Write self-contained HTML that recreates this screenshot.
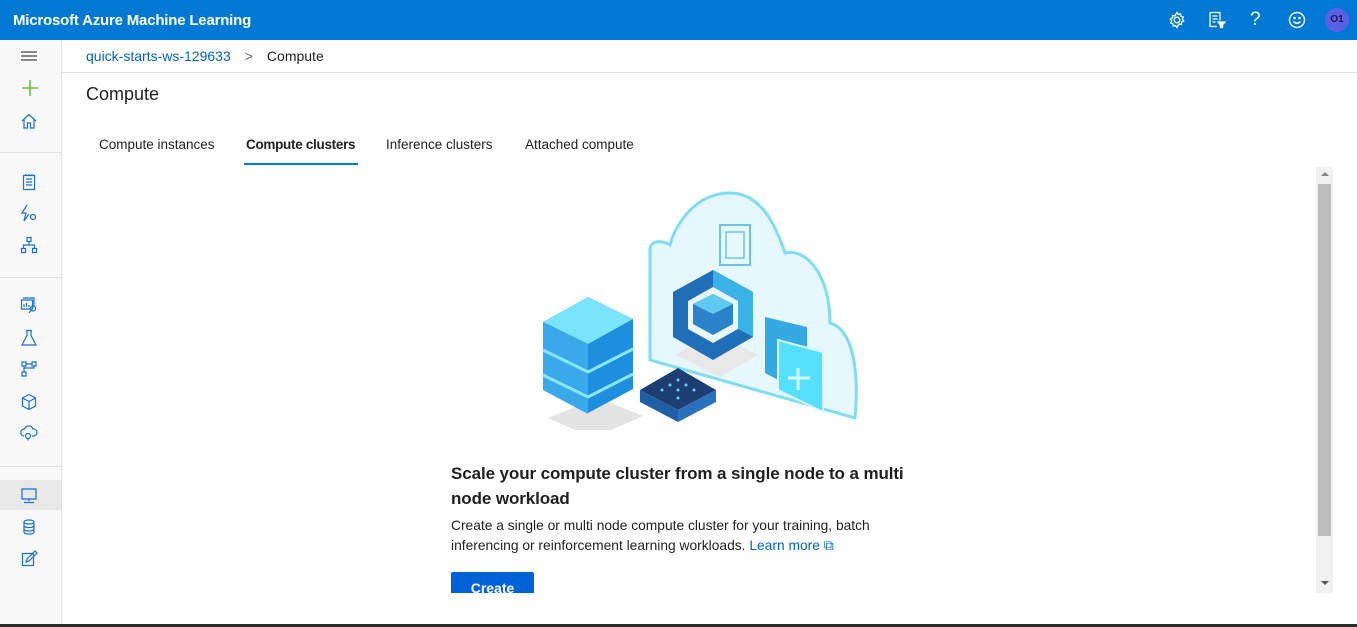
<!DOCTYPE html>
<html><head><meta charset="utf-8"><style>
*{margin:0;padding:0;box-sizing:border-box}
body{width:1357px;height:627px;overflow:hidden;background:#fff;font-family:"Liberation Sans",sans-serif;position:relative;color:#201f1e}
.top{position:absolute;left:0;top:0;width:1357px;height:40px;background:#0078d4;color:#fff}
.top .t{position:absolute;left:13px;top:12px;font-size:15px;font-weight:bold;letter-spacing:-0.2px}
.side{position:absolute;left:0;top:40px;width:62px;height:584px;background:#f8f8f8;border-right:1px solid #e1dfdd}
.side svg{position:absolute;left:20px}
.sep{position:absolute;left:0;width:61px;height:1px;background:#e1dfdd}
.bc{position:absolute;left:86px;top:48px;font-size:14px}
.bcline{position:absolute;left:62px;top:72px;width:1295px;height:1px;background:#e1dfdd}
h1{position:absolute;left:86px;top:84px;font-size:18px;font-weight:normal}
.tab{position:absolute;top:137px;font-size:13.5px}
.ul{position:absolute;left:244px;top:163px;width:114px;height:2px;background:#0078d4}
.h2{position:absolute;left:451px;top:461px;font-size:17px;font-weight:bold;line-height:25px;width:480px;letter-spacing:-0.1px}
.p{position:absolute;left:451px;top:516px;font-size:13.8px;line-height:20px;width:470px}
.btn{position:absolute;left:451px;top:572px;width:83px;height:21px;background:#0062d9;border-radius:2px 2px 0 0;color:#fff;font-size:14px;text-align:center;padding-top:8px;overflow:hidden;font-weight:bold;line-height:16px}
.track{position:absolute;left:1316px;top:167px;width:17px;height:426px;background:#f0f0f0}
.thumb{position:absolute;left:1318px;top:184px;width:13px;height:352px;background:#bdbdbd}
.bot{position:absolute;left:0;top:624px;width:1357px;height:3px;background:#2b2b2b}
</style></head><body>
<div class="top"><div class="t">Microsoft Azure Machine Learning</div>
<svg style="position:absolute;left:1168px;top:11px" width="18" height="18" viewBox="0 0 18 18" fill="none" stroke="#fff" stroke-width="1.3"><circle cx="9" cy="9" r="2.8"/><path d="M9 1.5l1.3 2 2.3-.7.4 2.4 2.3.8-1 2.1 1.4 1.9-2.2 1-.1 2.4-2.4-.3L9 16.5l-1.3-2-2.3.7-.4-2.4-2.3-.8 1-2.1L2.3 8l2.2-1 .1-2.4 2.4.3z"/></svg>
<svg style="position:absolute;left:1208px;top:11px" width="18" height="18" viewBox="0 0 18 18" fill="none" stroke="#fff" stroke-width="1.3"><path d="M2 1.5h10v8M2 1.5v14h7M4.5 5h5M4.5 8h5M4.5 11h3"/><path d="M10 11h7l-2.5 3v2.5h-2V14z" fill="#fff"/></svg>
<div style="position:absolute;left:1250px;top:9px;font-size:19px;color:#fff">?</div>
<svg style="position:absolute;left:1288px;top:11px" width="18" height="18" viewBox="0 0 18 18" fill="none" stroke="#fff" stroke-width="1.4"><circle cx="9" cy="9" r="7.5"/><path d="M5.5 10.5q3.5 3.5 7 0"/><circle cx="6.5" cy="7" r=".6" fill="#fff"/><circle cx="11.5" cy="7" r=".6" fill="#fff"/></svg>
<div style="position:absolute;left:1325px;top:8px;width:24px;height:24px;border-radius:50%;background:#5b5fe7;color:#1b1a40;font-size:10px;text-align:center;line-height:24px;font-weight:bold">O1</div>
</div>
<div class="side">
<svg style="top:9px" width="18" height="14" stroke="#444" stroke-width="1.2"><path d="M1 3h16M1 7h16M1 11h16"/></svg>
<svg style="top:38px" width="20" height="20" stroke="#6bbf3a" stroke-width="1.6"><path d="M10 2v16M2 10h16"/></svg>
<svg style="top:72px" width="18" height="18" fill="none" stroke="#1a6fd1" stroke-width="1.2"><path d="M2 9L9 2.5 16 9M4 7.5V16h3.5v-5h3v5H14V7.5"/></svg>
<div class="sep" style="top:112px"></div>
<svg style="top:133px" width="18" height="18" fill="none" stroke="#1a6fd1" stroke-width="1.2"><path d="M3.5 2.5h11v14h-11zM6 6h6M6 9h6M6 12h6M6 1v2M9 1v2M12 1v2"/></svg>
<svg style="top:164px" width="18" height="18" fill="none" stroke="#1a6fd1" stroke-width="1.2"><path d="M7 1L2 9h4l-2 8 5-7"/><circle cx="13" cy="13" r="2.5"/></svg>
<svg style="top:196px" width="18" height="18" fill="none" stroke="#1a6fd1" stroke-width="1.2"><path d="M7 1.5h4v4H7zM1.5 12.5h4v4h-4zM12.5 12.5h4v4h-4zM9 5.5v3.5M3.5 12.5V9h11v3.5"/></svg>
<div class="sep" style="top:237px"></div>
<svg style="top:256px" width="18" height="18" fill="none" stroke="#1a6fd1" stroke-width="1.2"><path d="M3 2h11v8M1.5 4h11v9h-11zM4 11V8M6.5 11V7M9 11V9"/><circle cx="13" cy="12.5" r="2.5"/><path d="M11 14.5l-2 2.5"/></svg>
<svg style="top:289px" width="18" height="18" fill="none" stroke="#1a6fd1" stroke-width="1.2"><path d="M6 1.5h6M7 1.5v5L2 16h14L11 6.5v-5"/></svg>
<svg style="top:320px" width="18" height="18" fill="none" stroke="#1a6fd1" stroke-width="1.2"><path d="M2 2h4v4H2zM12 2h4v4h-4zM2 12h4v4H2zM6 4h6M4 6v6M14 6v2H4"/></svg>
<svg style="top:353px" width="18" height="18" fill="none" stroke="#1a6fd1" stroke-width="1.2"><path d="M9 1.5l6.5 3.5v8L9 16.5 2.5 13V5zM2.5 5L9 8.5 15.5 5M9 8.5v8"/></svg>
<svg style="top:384px" width="18" height="18" fill="none" stroke="#1a6fd1" stroke-width="1.2"><path d="M4 12a3.5 3.5 0 0 1 .5-7A4.5 4.5 0 0 1 13 5a3.5 3.5 0 0 1 1 7h-2"/><circle cx="8" cy="12" r="2.5"/><path d="M8 14.5v2"/></svg>
<div class="sep" style="top:426px"></div>
<div style="position:absolute;left:0;top:440px;width:61px;height:30px;background:#e8e8e8"></div>
<svg style="top:447px" width="18" height="18" fill="none" stroke="#1a6fd1" stroke-width="1.2"><path d="M2 2h14v10H2zM9 12v2M4 15.5h10"/></svg>
<svg style="top:478px" width="18" height="18" fill="none" stroke="#1a6fd1" stroke-width="1.2"><ellipse cx="9" cy="4" rx="5" ry="2"/><path d="M4 4v10c0 2.7 10 2.7 10 0V4M4 7.5c0 2.7 10 2.7 10 0M4 11c0 2.7 10 2.7 10 0"/></svg>
<svg style="top:510px" width="18" height="18" fill="none" stroke="#1a6fd1" stroke-width="1.2"><path d="M2.5 3.5h11v12h-11zM6 12l1-3 8-8 2 2-8 8z"/></svg>
</div>
<div class="bc"><span style="color:#0062d9">quick-starts-ws-129633</span><span style="color:#666;margin:0 14px">&gt;</span>Compute</div>
<div class="bcline"></div>
<h1>Compute</h1>
<div class="tab" style="left:99px">Compute instances</div>
<div class="tab" style="left:246px;font-weight:bold;letter-spacing:-0.3px">Compute clusters</div>
<div class="tab" style="left:386px">Inference clusters</div>
<div class="tab" style="left:525px">Attached compute</div>
<div class="ul"></div>
<svg style="position:absolute;left:520px;top:190px" width="360" height="240" viewBox="0 0 360 240">
<path d="M130 60c0-10 12-10 20-5 5-20 25-52 60-52 30 0 45 30 55 60 20-5 45 20 45 70 20 5 30 40 25 95L130 170z" fill="#e6f7fd" stroke="#7fdcf5" stroke-width="3"/>
<rect x="200" y="35" width="30" height="40" fill="none" stroke="#6cc3ef" stroke-width="2"/>
<rect x="206" y="42" width="18" height="26" fill="none" stroke="#6cc3ef" stroke-width="1.5"/>
<path d="M155 165l38-22 45 22-38 22z" fill="#e8e8e8"/>
<path d="M193 80l40 22v45l-40 23-40-23v-45z" fill="#1f6eb8"/>
<path d="M193 80l40 22v45l-40-22z" fill="#3ab3e8"/>
<path d="M193 97l25 14v28l-25 14-25-14v-28z" fill="#e8f6fc"/>
<path d="M193 104l20 10v20l-20 11-20-11v-20z" fill="#2c82c9"/>
<path d="M173 114l20-10 20 10-20 10z" fill="#5ecaf0"/>
<path d="M245 127l42 10v68l-42-22z" fill="#34a9e2"/>
<path d="M258 150l45 12v60l-45-22z" fill="#54e0fb" stroke="#d8f6ff" stroke-width="2"/>
<path d="M278 178v22M268 188h22" stroke="#d8f6ff" stroke-width="3"/>
<path d="M28 228l50-20 45 18-50 22z" fill="#e3e3e3"/>
<path d="M23 132l45-25 45 22v70l-45 24-45-24z" fill="#1e8ede"/>
<path d="M23 132l45-25 45 22-45 25z" fill="#7ae4fb"/>
<path d="M23 132l45 22v70l-45-24z" fill="#3aa9ec"/>
<path d="M23 160l45 22 45-23M23 185l45 22 45-23" stroke="#8ae8fd" stroke-width="3" fill="none"/>
<path d="M120 200l38-22 38 22-38 20z" fill="#1d3e73"/>
<path d="M120 200l38 20v12l-38-20z" fill="#1f5fa6"/><path d="M158 220l38-20v12l-38 20z" fill="#2a72bd"/>
<g fill="#5fd3f7"><circle cx="150" cy="195" r="1.5"/><circle cx="158" cy="200" r="1.5"/><circle cx="166" cy="195" r="1.5"/><circle cx="158" cy="190" r="1.5"/><circle cx="142" cy="200" r="1.5"/><circle cx="174" cy="200" r="1.5"/><circle cx="158" cy="208" r="1.5"/></g>
</svg>
<div class="h2">Scale your compute cluster from a single node to a multi<br>node workload</div>
<div class="p">Create a single or multi node compute cluster for your training, batch inferencing or reinforcement learning workloads. <span style="color:#0062d9">Learn more ⧉</span></div>
<div class="btn">Create</div>
<div class="track"></div><div class="thumb"></div>
<div style="position:absolute;left:1321px;top:172px;width:0;height:0;border:4px solid transparent;border-bottom:4px solid #888;border-top:0"></div>
<div style="position:absolute;left:1321px;top:581px;width:0;height:0;border:4px solid transparent;border-top:4px solid #555;border-bottom:0"></div>
<div class="bot"></div>
</body></html>
